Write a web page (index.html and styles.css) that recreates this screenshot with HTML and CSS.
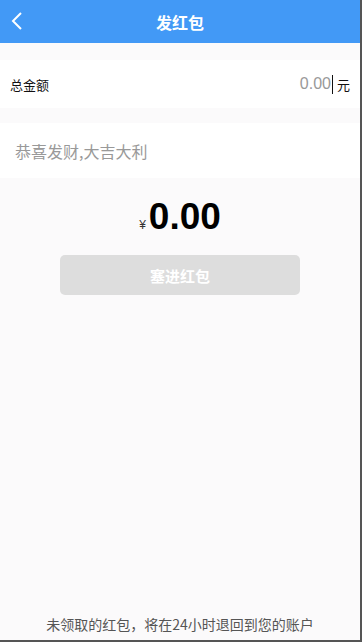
FILE: index.html
```html
<!DOCTYPE html>
<html lang="zh">
<head>
<meta charset="utf-8">
<link rel="stylesheet" href="styles.css">
</head>
<body>
<div class="app">
  <header class="bar">
    <svg class="back" width="14" height="20" viewBox="0 0 14 20"><path d="M11 2 L3 10 L11 18" fill="none" stroke="#fff" stroke-width="2"/></svg>
    <div class="title">发红包</div>
  </header>
  <div class="row amount-row">
    <span class="label">总金额</span>
    <span class="val"><span class="num">0.00</span><span class="caret"></span><span class="unit">元</span></span>
  </div>
  <div class="row msg-row">
    <span class="ph">恭喜发财,大吉大利</span>
  </div>
  <div class="total"><span class="yen">¥</span><span class="big">0.00</span></div>
  <div class="btn-wrap"><div class="btn">塞进红包</div></div>
  <div class="spacer"></div>
  <div class="foot">未领取的红包，将在24小时退回到您的账户</div>
</div>
</body>
</html>
```
FILE: styles.css
```css
html, body { margin: 0; padding: 0; }
body {
  width: 362px; height: 642px; box-sizing: border-box;
  border-right: 2px solid #555; border-bottom: 2px solid #555;
  background: #fbfafb;
  font-family: "Noto Sans CJK SC", "Liberation Sans", sans-serif;
  overflow: hidden;
}
.app { display: flex; flex-direction: column; height: 640px; }
.bar {
  height: 43px; background: #4299f6; position: relative;
  display: flex; align-items: center; justify-content: center;
}
.back { position: absolute; left: 10px; top: 11px; }
.title { color: #fff; font-size: 16px; font-weight: bold; }
.row { background: #fff; display: flex; align-items: center; }
.amount-row { margin-top: 17px; height: 48px; justify-content: space-between; padding: 0 10px 0 10px; }
.label { font-size: 13px; color: #111; }
.val { display: flex; align-items: center; }
.num { font-family: "Liberation Sans", sans-serif; font-size: 16px; color: #999; }
.caret { width: 1px; height: 19px; background: #111; margin: 0 4px 0 1px; }
.unit { font-size: 13px; color: #111; }
.msg-row { margin-top: 15px; height: 55px; padding-left: 15px; }
.ph { font-size: 16px; color: #999; }
.total { display: flex; justify-content: center; align-items: baseline; margin-top: 19px; height: 40px; }
.yen { font-size: 12px; color: #333; margin-right: 3px; font-family: "Liberation Sans", sans-serif; }
.big { font-size: 37px; font-weight: bold; color: #000; font-family: "Liberation Sans", sans-serif; line-height: 40px; }
.btn-wrap { display: flex; justify-content: center; margin-top: 18px; }
.btn {
  width: 240px; height: 40px; border-radius: 5px; background: #dddddd;
  color: #fff; font-size: 15px; font-weight: bold;
  display: flex; align-items: center; justify-content: center;
}
.spacer { flex: 1; }
.foot { text-align: center; font-size: 14px; color: #555; padding-bottom: 6px; }
```
